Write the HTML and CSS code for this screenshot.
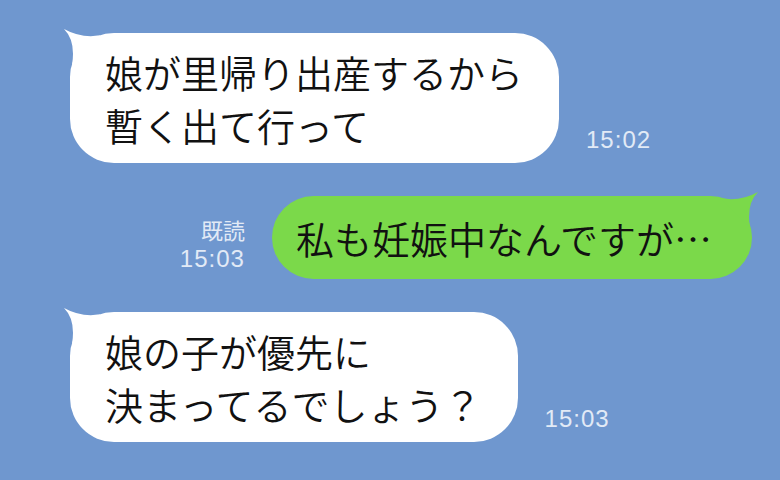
FILE: index.html
```html
<!DOCTYPE html>
<html lang="ja">
<head>
    <meta charset="UTF-8">
    <meta name="viewport" content="width=device-width, initial-scale=1.0">
    <title>トーク</title>
    <link rel="stylesheet" href="styles.css">
</head>
<body>
    <div class="chat">
        <div class="row left">
            <div class="bubble white">
                <svg class="tail" width="40" height="40" viewBox="-10 -6 40 40"><path d="M-6 -4 Q6 8 2 32 L32 2 Q12 6 -6 -4 Z" fill="#fff"/></svg>
                <p>娘が里帰り出産するから<br>暫く出て行って</p>
            </div>
            <div class="meta"><span class="time">15:02</span></div>
        </div>

        <div class="row right">
            <div class="meta">
                <span class="read">既読</span>
                <span class="time">15:03</span>
            </div>
            <div class="bubble green">
                <svg class="tail" width="40" height="40" viewBox="-10 -6 40 40"><path d="M-6 -4 Q6 8 2 32 L32 2 Q12 6 -6 -4 Z" fill="#7bd94a"/></svg>
                <p>私も妊娠中なんですが…</p>
            </div>
        </div>

        <div class="row left">
            <div class="bubble white">
                <svg class="tail" width="40" height="40" viewBox="-10 -6 40 40"><path d="M-6 -4 Q6 8 2 32 L32 2 Q12 6 -6 -4 Z" fill="#fff"/></svg>
                <p>娘の子が優先に<br>決まってるでしょう？</p>
            </div>
            <div class="meta"><span class="time">15:03</span></div>
        </div>
    </div>
</body>
</html>
```

FILE: styles.css
```css
body, html {
    margin: 0;
    padding: 0;
    width: 100%;
    height: 100%;
    overflow: hidden;
    background-color: #6f97cf;
    font-family: "Noto Sans CJK JP", "Noto Sans", sans-serif;
}
.chat {
    display: flex;
    flex-direction: column;
    gap: 33px;
    padding: 33px 28px 0 70px;
}
.row {
    display: flex;
    align-items: flex-end;
    gap: 27px;
}
.row.right {
    justify-content: flex-end;
}
.bubble {
    position: relative;
    border-radius: 44px;
    color: #111;
}
.bubble p {
    margin: 0;
    font-size: 38px;
    font-weight: 350;
    line-height: 53px;
    white-space: nowrap;
}
.white {
    background: #fff;
    padding: 12px 36px 12px 35px;
}
.green {
    background: #7bd94a;
    padding: 15px 40px 15px 24px;
}
.tail {
    position: absolute;
    top: -6px;
    left: -10px;
}
.green .tail {
    left: auto;
    right: -10px;
    transform: scaleX(-1);
}
.meta {
    display: flex;
    flex-direction: column;
    align-items: flex-end;
    padding-bottom: 8px;
    color: #e2eaf6;
}
.right .meta {
    padding-bottom: 5px;
}
.time {
    font-family: "Liberation Sans", Arial, sans-serif;
    font-size: 24px;
    letter-spacing: 1px;
    line-height: 30px;
}
.read {
    font-size: 22px;
    line-height: 30px;
}
```
